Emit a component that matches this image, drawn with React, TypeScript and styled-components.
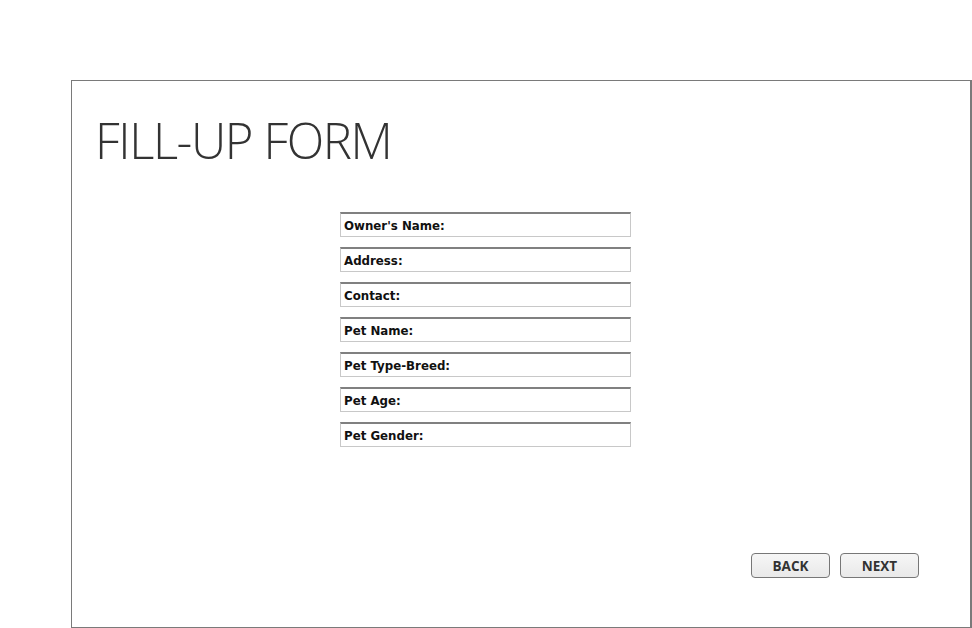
import React from "react";
import styled, { createGlobalStyle } from "styled-components";

const Global = createGlobalStyle`
  html, body { margin: 0; padding: 0; background: #ffffff; }
  body { font-family: "Open Sans", "DejaVu Sans", sans-serif; }
`;

const Page = styled.div`
  width: 972px;
  height: 628px;
  padding: 80px 0 0 71px;
  box-sizing: border-box;
`;

const Panel = styled.section`
  width: 901px;
  height: 548px;
  box-sizing: border-box;
  border: 1px solid #7a7a7a;
  border-right-width: 2px;
  display: flex;
  flex-direction: column;
`;

const Title = styled.h1`
  margin: 35px 0 0 23px;
  font-family: "Open Sans", sans-serif;
  font-weight: 300;
  font-size: 49px;
  line-height: 49px;
  color: #333333;
  letter-spacing: -1.4px;
`;

const Fields = styled.div`
  margin: 47px 0 0 268px;
  display: flex;
  flex-direction: column;
  gap: 10px;
`;

const Field = styled.div`
  width: 291px;
  height: 25px;
  box-sizing: border-box;
  border: 1px solid #c8c8c8;
  border-top: 2px solid #808080;
  display: flex;
  align-items: center;
  padding: 1px 0 0 3px;
  font-family: "DejaVu Sans", Verdana, sans-serif;
  font-weight: bold;
  font-size: 11.8px;
  color: #111111;
`;

const Footer = styled.div`
  margin-top: auto;
  margin-bottom: 49px;
  padding-right: 51px;
  display: flex;
  justify-content: flex-end;
  gap: 10px;
`;

const Button = styled.button`
  width: 79px;
  height: 25px;
  box-sizing: border-box;
  border: 1px solid #777777;
  border-radius: 4px;
  background: linear-gradient(#f6f6f6, #e9e9e9);
  font-family: "Open Sans", sans-serif;
  font-weight: 700;
  font-size: 13.5px;
  color: #333333;
  padding: 0;
`;

const labels = [
  "Owner's Name:",
  "Address:",
  "Contact:",
  "Pet Name:",
  "Pet Type-Breed:",
  "Pet Age:",
  "Pet Gender:",
];

export default function App() {
  return (
    <>
      <Global />
      <Page>
        <Panel>
          <Title>FILL-UP FORM</Title>
          <Fields>
            {labels.map((l) => (
              <Field key={l}>{l}</Field>
            ))}
          </Fields>
          <Footer>
            <Button>BACK</Button>
            <Button>NEXT</Button>
          </Footer>
        </Panel>
      </Page>
    </>
  );
}
